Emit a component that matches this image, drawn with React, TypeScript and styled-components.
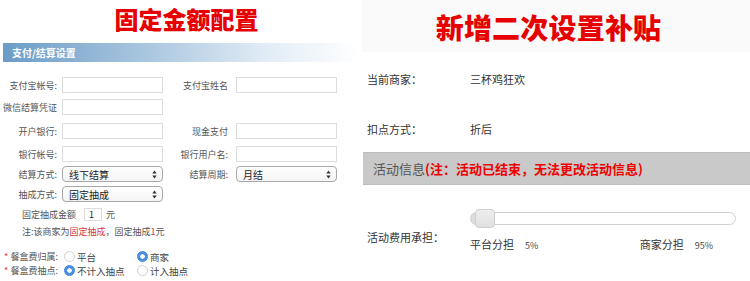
import styled, { createGlobalStyle } from 'styled-components';

const GlobalStyle = createGlobalStyle`
  html, body {
    margin: 0;
    padding: 0;
    background: #fff;
  }
  body {
    font-family: "Noto Sans CJK SC", "Noto Sans", sans-serif;
  }
`;

const Page = styled.div`
  display: flex;
  width: 750px;
  height: 281px;
  overflow: hidden;
  background: #fff;
`;

/* ---------- left: fixed amount config ---------- */

const Left = styled.section`
  width: 362px;
  display: flex;
  flex-direction: column;
`;

const BigTitle = styled.h1<{ $size: number; $height: number }>`
  margin: 0;
  height: ${(p) => p.$height}px;
  display: flex;
  align-items: center;
  justify-content: center;
  font-size: ${(p) => p.$size}px;
  font-weight: 900;
  color: #e60000;
  line-height: 1;
`;

const LeftTitle = styled(BigTitle)`
  padding-left: 11px;
`;

const SectionHeader = styled.div`
  margin: 5px 3px 0;
  height: 19px;
  display: flex;
  align-items: center;
  padding-left: 9px;
  font-size: 10px;
  font-weight: 700;
  color: #fff;
  background: linear-gradient(to right, #6b9cc6 0%, #a9c6df 40%, #e3edf6 75%, #fff 100%);
`;

const Form = styled.div`
  padding-top: 15px;
  display: flex;
  flex-direction: column;
`;

const Row = styled.div<{ $mt: number; $h?: number; $indent?: number }>`
  display: flex;
  align-items: center;
  height: ${(p) => p.$h ?? 16}px;
  margin-top: ${(p) => p.$mt}px;
  padding-left: ${(p) => p.$indent ?? 0}px;
  font-size: 9px;
  color: #555;
  white-space: nowrap;
`;

const Label = styled.label<{ $w: number; $gap: number }>`
  width: ${(p) => p.$w}px;
  margin-right: ${(p) => p.$gap}px;
  text-align: right;
  font-size: 9px;
  color: #555;
  white-space: nowrap;
`;

const TextBox = styled.div`
  width: 101px;
  height: 16px;
  box-sizing: border-box;
  border: 1px solid #dcdcdc;
  background: #fff;
`;

const Select = styled.div`
  width: 101px;
  height: 16px;
  box-sizing: border-box;
  border: 1px solid #a8a8a8;
  border-radius: 4px;
  background: linear-gradient(#fff, #f4f4f4);
  display: flex;
  align-items: center;
  justify-content: space-between;
  padding: 0 5px 0 6px;
  font-size: 10px;
  color: #222;
`;

const Arrows = () => (
  <svg width="5" height="9" viewBox="0 0 5 9">
    <path d="M2.5 0.5 L4.7 3.5 H0.3 Z M2.5 8.5 L4.7 5.5 H0.3 Z" fill="#333" />
  </svg>
);

const SmallBox = styled.div`
  width: 18px;
  height: 13px;
  box-sizing: border-box;
  border: 1px solid #dcdcdc;
  margin: 0 4px 0 8px;
  font-size: 9px;
  color: #222;
  padding-left: 4px;
  line-height: 11px;
`;

const Red = styled.span`
  color: #d9363e;
`;

const Star = styled.span`
  width: 5px;
  margin-left: 4px;
  color: #e33;
  font-size: 9px;
`;

const Option = styled.span<{ $w?: number }>`
  display: inline-flex;
  align-items: center;
  width: ${(p) => (p.$w ? `${p.$w}px` : 'auto')};
  font-size: 9.5px;
  color: #444;
`;

const Radio = styled.span<{ $on?: boolean }>`
  width: 11px;
  height: 11px;
  box-sizing: border-box;
  border-radius: 50%;
  margin-right: 2px;
  border: 1px solid ${(p) => (p.$on ? '#3d82d8' : '#cfcfcf')};
  background: ${(p) =>
    p.$on ? 'radial-gradient(circle, #fff 0 2px, #4a8fe0 2.5px)' : '#fff'};
`;

/* ---------- right: second subsidy ---------- */

const Right = styled.section`
  flex: 1;
  display: flex;
  flex-direction: column;
`;

const RightTitle = styled(BigTitle)`
  background: #fafafa;
  padding: 2px 15px 0 0;
  letter-spacing: 0.2px;
`;

const InfoRow = styled.div<{ $mt: number }>`
  display: flex;
  align-items: center;
  height: 16px;
  margin-top: ${(p) => p.$mt}px;
  padding-left: 5px;
  font-size: 11px;
  color: #333;
`;

const InfoLabel = styled.span`
  width: 103px;
`;

const NoticeBar = styled.div`
  margin: 15px 0 0 1px;
  height: 33px;
  box-sizing: border-box;
  background: #c9c9c9;
  border-top: 1px solid #bdbdbd;
  border-bottom: 1px solid #bdbdbd;
  display: flex;
  align-items: center;
  padding-left: 10px;
  font-size: 13px;
  color: #555;
`;

const NoticeRed = styled.span`
  color: #e00;
  font-weight: 700;
`;

const SliderRow = styled.div`
  display: flex;
  margin-top: 24px;
  padding-left: 5px;
  font-size: 11px;
  color: #333;
`;

const SliderLabel = styled.span`
  width: 103px;
  padding-top: 22px;
  line-height: 12px;
`;

const SliderCol = styled.div`
  width: 266px;
  display: flex;
  flex-direction: column;
`;

const TrackWrap = styled.div`
  position: relative;
  height: 19px;
  display: flex;
  align-items: center;
`;

const Track = styled.div`
  width: 100%;
  height: 13px;
  box-sizing: border-box;
  border: 1px solid #cfcfcf;
  border-radius: 7px;
  background: linear-gradient(to right, #dedede 0 12px, #fff 12px);
`;

const Handle = styled.div`
  position: absolute;
  left: 5px;
  top: 0;
  width: 20px;
  height: 19px;
  box-sizing: border-box;
  border: 1px solid #cfcfcf;
  border-radius: 4px;
  background: linear-gradient(#eee, #e0e0e0);
`;

const Shares = styled.div`
  display: flex;
  justify-content: space-between;
  margin-top: 10px;
  padding-right: 23px;
  line-height: 12px;
`;

const Share = styled.span`
  display: inline-flex;
  align-items: baseline;
  gap: 11px;
`;

const Pct = styled.span`
  font-size: 9px;
  color: #444;
`;

export default function App() {
  return (
    <>
      <GlobalStyle />
      <Page>
        <Left>
          <LeftTitle $size={24} $height={38}>固定金额配置</LeftTitle>
          <SectionHeader>支付/结算设置</SectionHeader>
          <Form>
            <Row $mt={0}>
              <Label $w={57} $gap={5}>支付宝帐号:</Label>
              <TextBox />
              <Label $w={65} $gap={8}>支付宝姓名</Label>
              <TextBox />
            </Row>
            <Row $mt={6}>
              <Label $w={57} $gap={5}>微信结算凭证</Label>
              <TextBox />
            </Row>
            <Row $mt={8}>
              <Label $w={57} $gap={5}>开户银行:</Label>
              <TextBox />
              <Label $w={65} $gap={8}>现金支付</Label>
              <TextBox />
            </Row>
            <Row $mt={7}>
              <Label $w={57} $gap={5}>银行帐号:</Label>
              <TextBox />
              <Label $w={65} $gap={8}>银行用户名:</Label>
              <TextBox />
            </Row>
            <Row $mt={4}>
              <Label $w={57} $gap={5}>结算方式:</Label>
              <Select>线下结算<Arrows /></Select>
              <Label $w={65} $gap={8}>结算周期:</Label>
              <Select>月结<Arrows /></Select>
            </Row>
            <Row $mt={4}>
              <Label $w={57} $gap={5}>抽成方式:</Label>
              <Select>固定抽成<Arrows /></Select>
            </Row>
            <Row $mt={6} $h={13} $indent={22}>
              固定抽成金额<SmallBox>1</SmallBox>元
            </Row>
            <Row $mt={4} $h={12} $indent={22}>
              注:该商家为<Red>固定抽成</Red>，固定抽成<Red>1</Red>元
            </Row>
            <Row $mt={13} $h={13}>
              <Star>*</Star>
              <Label $w={49} $gap={6}>餐盒费归属:</Label>
              <Option $w={73}><Radio />平台</Option>
              <Option><Radio $on />商家</Option>
            </Row>
            <Row $mt={1} $h={13}>
              <Star>*</Star>
              <Label $w={49} $gap={6}>餐盒费抽点:</Label>
              <Option $w={73}><Radio $on />不计入抽点</Option>
              <Option><Radio />计入抽点</Option>
            </Row>
          </Form>
        </Left>
        <Right>
          <RightTitle $size={28} $height={50}>新增二次设置补贴</RightTitle>
          <InfoRow $mt={19}>
            <InfoLabel>当前商家：</InfoLabel>三杯鸡狂欢
          </InfoRow>
          <InfoRow $mt={34}>
            <InfoLabel>扣点方式：</InfoLabel>折后
          </InfoRow>
          <NoticeBar>
            活动信息<NoticeRed>(注：活动已结束，无法更改活动信息)</NoticeRed>
          </NoticeBar>
          <SliderRow>
            <SliderLabel>活动费用承担：</SliderLabel>
            <SliderCol>
              <TrackWrap>
                <Track />
                <Handle />
              </TrackWrap>
              <Shares>
                <Share>平台分担<Pct>5%</Pct></Share>
                <Share>商家分担<Pct>95%</Pct></Share>
              </Shares>
            </SliderCol>
          </SliderRow>
        </Right>
      </Page>
    </>
  );
}
